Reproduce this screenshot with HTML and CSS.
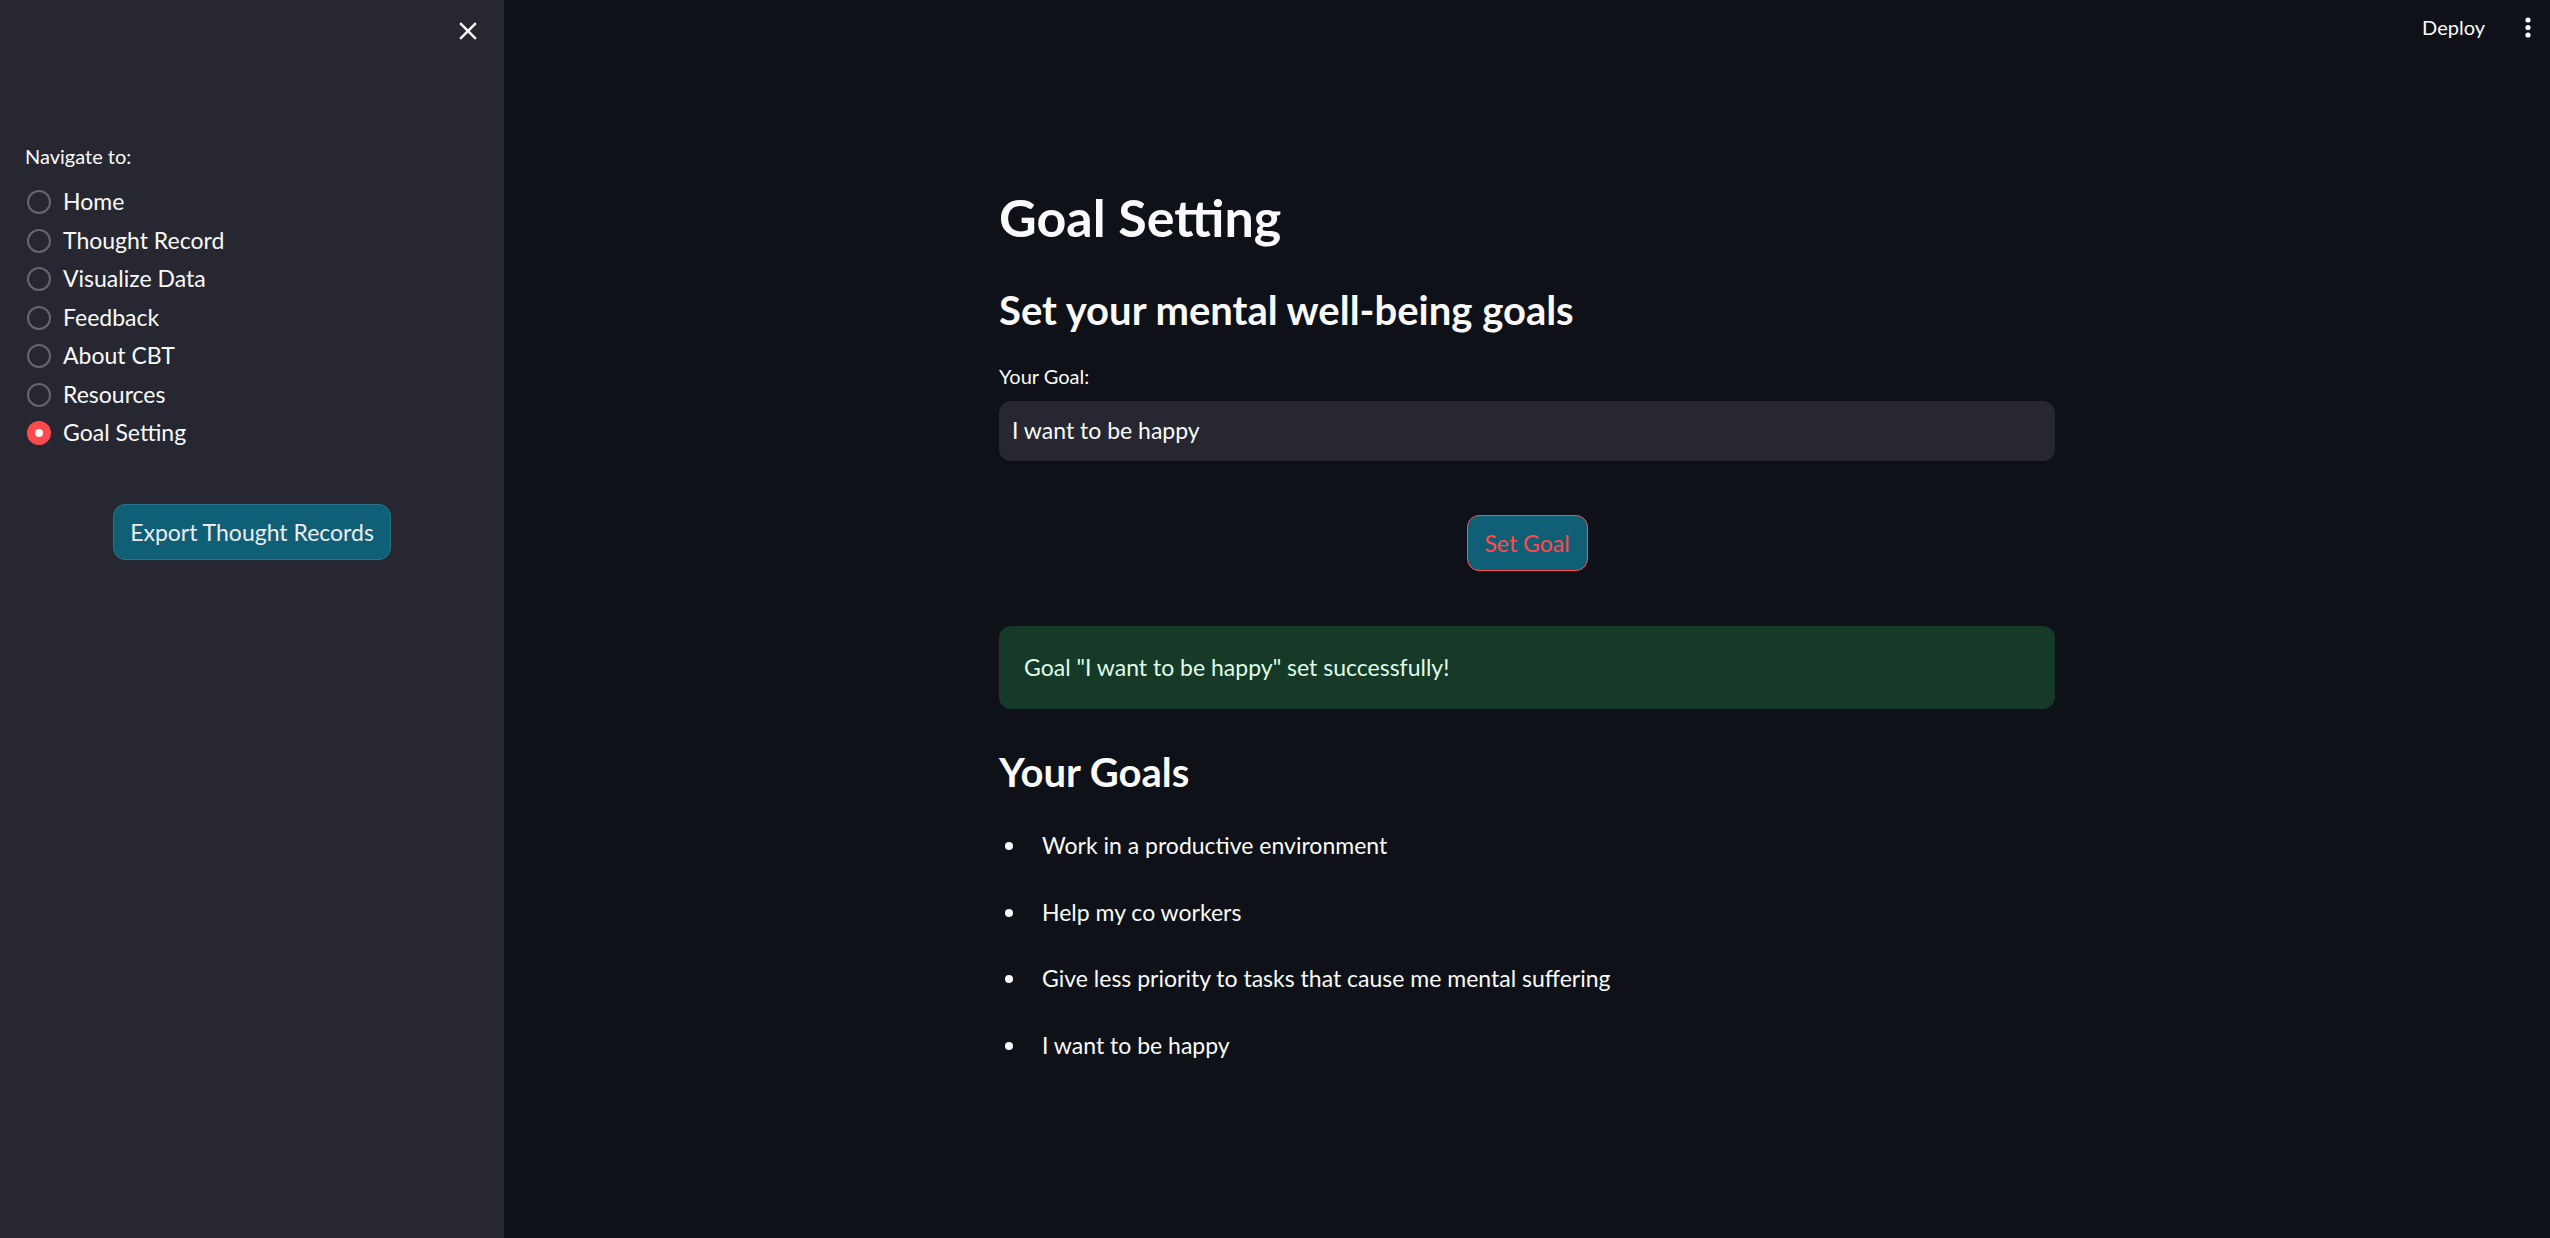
FILE: index.html
```html
<!DOCTYPE html>
<html lang="en">
<head>
<meta charset="utf-8">
<title>Goal Setting</title>
<link rel="stylesheet" href="styles.css">
</head>
<body>
<aside class="sidebar">
  <div class="sb-top">
    <svg class="close" width="30" height="30" viewBox="0 0 24 24"><path fill="#fafafa" d="M19 6.41L17.59 5 12 10.59 6.41 5 5 6.41 10.59 12 5 17.59 6.41 19 12 13.41 17.59 19 19 17.59 13.41 12z"/></svg>
  </div>
  <div class="nav">
    <div class="nav-label">Navigate to:</div>
    <div class="radios">
      <div class="radio"><span class="dot"></span><span class="rtext">Home</span></div>
      <div class="radio"><span class="dot"></span><span class="rtext">Thought Record</span></div>
      <div class="radio"><span class="dot"></span><span class="rtext">Visualize Data</span></div>
      <div class="radio"><span class="dot"></span><span class="rtext">Feedback</span></div>
      <div class="radio"><span class="dot"></span><span class="rtext">About CBT</span></div>
      <div class="radio"><span class="dot"></span><span class="rtext">Resources</span></div>
      <div class="radio"><span class="dot on"></span><span class="rtext">Goal Setting</span></div>
    </div>
  </div>
  <div class="export-wrap"><button class="btn export">Export Thought Records</button></div>
</aside>
<main class="main">
  <header class="topbar">
    <span class="deploy">Deploy</span>
    <svg class="kebab" width="6" height="21" viewBox="0 0 6 21"><circle cx="3" cy="3" r="2.6" fill="#fafafa"/><circle cx="3" cy="10.5" r="2.6" fill="#fafafa"/><circle cx="3" cy="18" r="2.6" fill="#fafafa"/></svg>
  </header>
  <section class="block">
    <h1 class="title">Goal Setting</h1>
    <h2 class="sub">Set your mental well-being goals</h2>
    <label class="field-label">Your Goal:</label>
    <div class="input">I want to be happy</div>
    <div class="btn-row"><button class="btn setgoal">Set Goal</button></div>
    <div class="alert">Goal "I want to be happy" set successfully!</div>
    <h2 class="sub goals-h">Your Goals</h2>
    <ul class="goals">
      <li>Work in a productive environment</li>
      <li>Help my co workers</li>
      <li>Give less priority to tasks that cause me mental suffering</li>
      <li>I want to be happy</li>
    </ul>
  </section>
</main>
</body>
</html>
```
FILE: styles.css
```css
* { box-sizing: border-box; margin: 0; padding: 0; }
html, body { height: 100%; }
body {
  font-family: Lato, "Noto Sans", sans-serif;
  background: #0e1117;
  color: #fafafa;
  display: flex;
  overflow: hidden;
}

/* Sidebar */
.sidebar {
  width: 504px;
  flex: none;
  height: 100vh;
  background: #262730;
  display: flex;
  flex-direction: column;
}
.sb-top {
  display: flex;
  justify-content: flex-end;
  padding: 16px 21px 0 0;
}
.close { display: block; }
.nav { padding-left: 25px; margin-top: 98px; }
.nav-label {
  font-size: 20px;
  line-height: 24px;
}
.radios { margin-top: 15px; }
.radio {
  height: 38.5px;
  display: flex;
  align-items: center;
}
.dot {
  width: 24px;
  height: 24px;
  border-radius: 50%;
  border: 2px solid #66676e;
  margin-left: 2px;
  flex: none;
  display: flex;
  align-items: center;
  justify-content: center;
}
.dot.on { background: #ff4b4b; border-color: #ff4b4b; }
.dot.on::after {
  content: "";
  width: 8px;
  height: 8px;
  border-radius: 50%;
  background: #fafafa;
}
.rtext {
  margin-left: 12px;
  font-size: 23px;
  line-height: 27.6px;
}
.export-wrap {
  display: flex;
  justify-content: center;
  margin-top: 51.5px;
}
.btn {
  font-family: inherit;
  font-size: 23px;
  height: 56px;
  border-radius: 12px;
  background: #0f5f77;
  display: flex;
  align-items: center;
  justify-content: center;
}
.export {
  width: 278px;
  color: #ececec;
  border: 1.5px solid #2a7489;
}

/* Main */
.main {
  flex: 1;
  height: 100vh;
  display: flex;
  flex-direction: column;
}
.topbar {
  height: 56px;
  display: flex;
  justify-content: flex-end;
  align-items: flex-start;
  padding-right: 19px;
}
.deploy {
  font-size: 20px;
  line-height: 24px;
  margin-top: 15px;
  margin-right: 40px;
}
.kebab { margin-top: 17px; display: block; }

.block {
  width: 1056px;
  margin: 0 auto;
  padding-top: 130px;
}
.title {
  font-size: 52px;
  font-weight: 700;
  line-height: 62.4px;
}
.sub {
  font-size: 40px;
  font-weight: 700;
  line-height: 48px;
  margin-top: 38px;
}
.field-label {
  display: block;
  font-size: 20px;
  line-height: 24px;
  margin-top: 30px;
}
.input {
  margin-top: 12.7px;
  height: 60px;
  background: #262730;
  border-radius: 12px;
  padding-left: 13px;
  display: flex;
  align-items: center;
  font-size: 23px;
  line-height: 27.6px;
}
.btn-row {
  display: flex;
  justify-content: center;
  margin-top: 54px;
}
.setgoal {
  width: 121px;
  color: #ff4b4b;
  border: 1.5px solid #ff4b4b;
}
.alert {
  margin-top: 55px;
  height: 83px;
  background: #173928;
  border-radius: 12px;
  color: #dffde9;
  padding-left: 25px;
  display: flex;
  align-items: center;
  font-size: 23px;
  line-height: 27.6px;
}
.goals-h { margin-top: 39px; }
.goals {
  list-style: none;
  margin-top: 36px;
}
.goals li {
  display: flex;
  align-items: center;
  font-size: 23px;
  line-height: 27.6px;
  margin-bottom: 39.1px;
}
.goals li::before {
  content: "";
  width: 8px;
  height: 8px;
  border-radius: 50%;
  background: #fafafa;
  margin-left: 6px;
  margin-right: 29px;
  flex: none;
}
```
